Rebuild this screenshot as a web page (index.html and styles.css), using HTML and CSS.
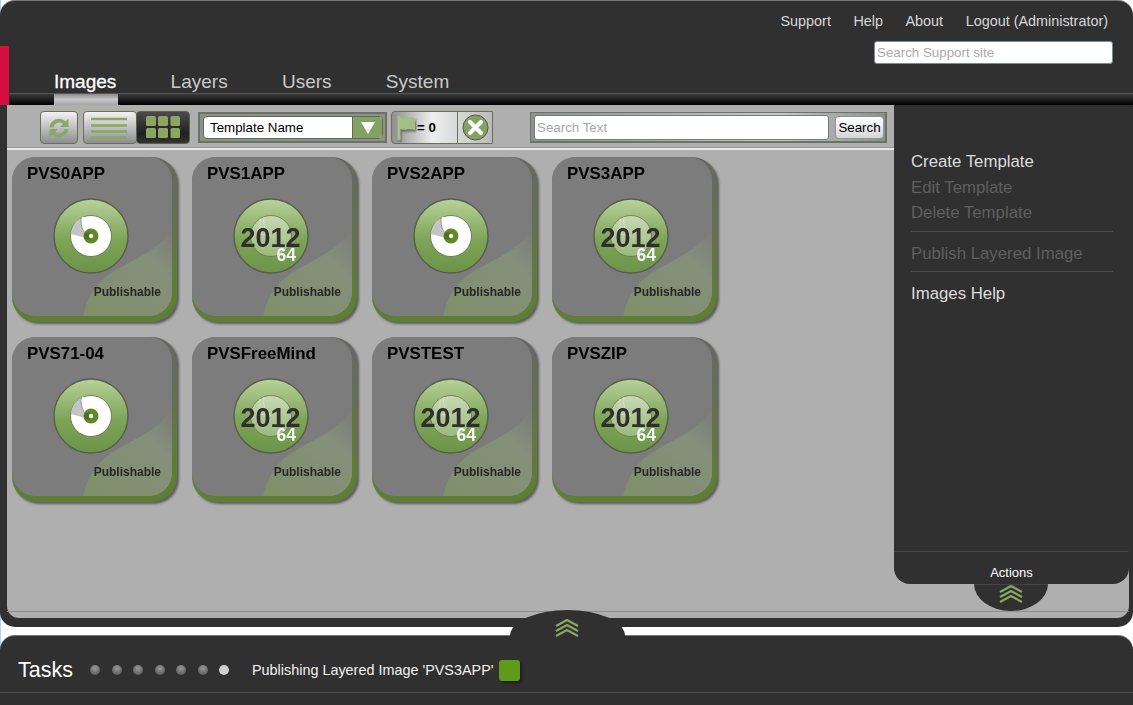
FILE: index.html
```html
<!DOCTYPE html>
<html lang="en">
<head>
<meta charset="utf-8">
<title>Images</title>
<link rel="stylesheet" href="styles.css">
</head>
<body>
<svg class="defs" width="0" height="0" aria-hidden="true">
  <defs>
    <linearGradient id="disc" x1="0" y1="0" x2="0" y2="1">
      <stop offset="0" stop-color="#b9d29a"/>
      <stop offset=".55" stop-color="#7da457"/>
      <stop offset="1" stop-color="#6c9448"/>
    </linearGradient>
    <linearGradient id="inner" x1="0" y1="0" x2="0" y2="1">
      <stop offset="0" stop-color="#c8d9b4"/>
      <stop offset="1" stop-color="#9aba7c"/>
    </linearGradient>
    <linearGradient id="rim" x1="0" y1="0" x2="0" y2="1">
      <stop offset="0" stop-color="#666"/>
      <stop offset=".4" stop-color="#66704f"/>
      <stop offset=".8" stop-color="#5e7d35"/>
      <stop offset="1" stop-color="#5e7d35"/>
    </linearGradient>
    <linearGradient id="sheen" x1="1" y1="0" x2="0" y2="1">
      <stop offset="0" stop-color="#7b7b7b"/>
      <stop offset=".3" stop-color="#858f7b"/>
      <stop offset="1" stop-color="#7f9069"/>
    </linearGradient>
    <clipPath id="cardface"><rect width="160" height="159" rx="23"/></clipPath>
    <symbol id="card-bg" viewBox="0 0 165 165">
      <rect width="165" height="165" rx="25" fill="url(#rim)"/>
      <rect width="160" height="159" rx="23" fill="#7c7c7c"/>
      <path clip-path="url(#cardface)" d="M71 160C76 136 88 122 106 112C125 101 148 92 161 71V160Z" fill="url(#sheen)"/>
    </symbol>
    <symbol id="disc-app" viewBox="0 0 76 76">
      <circle cx="38" cy="38" r="37" fill="url(#disc)" stroke="#565f4c" stroke-width="1.400"/>
      <circle cx="38" cy="38" r="20.500" fill="#fff" stroke="#5f6b52" stroke-width=".8"/>
      <path d="M27 20.500A20 20 0 0 0 18 36L36 41Z" fill="#c4c4c4"/>
      <path d="M30 19Q28 32 36 38" fill="none" stroke="#fff" stroke-width="2"/>
      <path d="M28 20Q27 31 34 37" fill="none" stroke="#8d8d8d" stroke-width=".8"/>
      <circle cx="38" cy="38" r="7.500" fill="#5f8a26"/>
      <circle cx="34.500" cy="38" r="3.500" fill="#41651a" opacity=".7"/>
      <circle cx="38" cy="38" r="2.200" fill="#fff"/>
    </symbol>
    <symbol id="disc-2012" viewBox="0 0 76 76">
      <circle cx="38" cy="38" r="37" fill="url(#disc)" stroke="#565f4c" stroke-width="1.400"/>
      <circle cx="38" cy="38" r="20.500" fill="url(#inner)" stroke="#66734f" stroke-width=".8"/>
      <path d="M27 20.500V36L38 38M31 19Q29 30 37 37" fill="none" stroke="#e1e8d6" stroke-width=".7"/>
    </symbol>
    <symbol id="chevrons" viewBox="0 0 24 18">
      <path d="M1 7 12 1 23 7M1 12 12 6 23 12M1 17 12 11 23 17" fill="none" stroke="#8ca662" stroke-width="2.200"/>
    </symbol>
  </defs>
</svg>

<div class="app">
  <div class="accent"></div>
  <header class="header">
    <nav class="toplinks">
      <a>Support</a><a>Help</a><a>About</a><a>Logout (Administrator)</a>
    </nav>
    <input class="support-search" type="text" placeholder="Search Support site">
    <nav class="tabs">
      <a class="tab active">Images</a><a class="tab">Layers</a><a class="tab">Users</a><a class="tab">System</a>
    </nav>
  </header>
  <div class="tabbar"><span class="tabmark"></span></div>

  <main class="content">
    <div class="workspace">
      <div class="toolbar">
        <button class="tool refresh" aria-label="Refresh">
          <svg width="22" height="22" viewBox="0 0 22 22"><path d="M1.500 10.500A9.500 9.500 0 0 1 17.500 4.500L20.500 1.500V10H12L15 7A5.800 5.800 0 0 0 5.500 10.500ZM20.500 12A9.500 9.500 0 0 1 4.500 17.500L1.500 20.500V12H10L7 15A5.800 5.800 0 0 0 16.500 12Z" fill="#8aa868"/></svg>
        </button>
        <div class="viewswitch">
          <button class="tool view" aria-label="List view">
            <svg width="37" height="22" viewBox="0 0 37 22"><path d="M0 2H36M0 8.500H36M0 14.500H36M0 20.500H36" stroke="#8ca662" stroke-width="2.500" fill="none"/></svg>
          </button>
          <button class="tool view on" aria-label="Grid view">
            <svg width="35" height="23" viewBox="0 0 35 23"><g fill="#8ca662"><rect x="1" width="10" height="10" rx="1.500"/><rect x="13" width="10" height="10" rx="1.500"/><rect x="25.500" width="9.500" height="10" rx="1.500"/><rect x="1" y="12" width="10" height="10" rx="1.500"/><rect x="13" y="12" width="10" height="10" rx="1.500"/><rect x="25.500" y="12" width="9.500" height="10" rx="1.500"/></g></svg>
          </button>
        </div>
        <div class="group sortgroup">
          <div class="select">
            <span class="select-label">Template Name</span>
            <span class="select-arrow"><svg width="14" height="12" viewBox="0 0 14 12"><path d="M0 0H14L7 12Z" fill="#fff"/></svg></span>
          </div>
        </div>
        <div class="flaggroup">
          <span class="flagcount">
            <svg class="flag" width="19" height="26" viewBox="0 0 19 26"><path d="M2 1V25" stroke="#a9bf8d" stroke-width="3"/><path d="M3 2C8 4 11 1 18 3V15C11 13 8 16 3 14Z" fill="#a3c083"/></svg>
            <b>= 0</b>
          </span>
          <span class="flagclear">
            <svg width="27" height="27" viewBox="0 0 27 27"><circle cx="13.500" cy="13.500" r="12.500" fill="#84a062" stroke="#4f5b45"/><path d="M8 8 19 19M19 8 8 19" stroke="#fff" stroke-width="4.200" stroke-linecap="round"/></svg>
          </span>
        </div>
        <div class="group searchgroup">
          <input class="textsearch" type="text" placeholder="Search Text">
          <button class="searchbtn">Search</button>
        </div>
      </div>

      <div class="cards">
        <article class="card"><svg class="card-face" width="165" height="165"><use href="#card-bg"/></svg><h3>PVS0APP</h3><div class="disc"><svg width="76" height="76"><use href="#disc-app"/></svg></div><span class="state">Publishable</span></article>
        <article class="card"><svg class="card-face" width="165" height="165"><use href="#card-bg"/></svg><h3>PVS1APP</h3><div class="disc"><svg width="76" height="76"><use href="#disc-2012"/></svg><span class="year">2012</span><span class="bits">64</span></div><span class="state">Publishable</span></article>
        <article class="card"><svg class="card-face" width="165" height="165"><use href="#card-bg"/></svg><h3>PVS2APP</h3><div class="disc"><svg width="76" height="76"><use href="#disc-app"/></svg></div><span class="state">Publishable</span></article>
        <article class="card"><svg class="card-face" width="165" height="165"><use href="#card-bg"/></svg><h3>PVS3APP</h3><div class="disc"><svg width="76" height="76"><use href="#disc-2012"/></svg><span class="year">2012</span><span class="bits">64</span></div><span class="state">Publishable</span></article>
        <article class="card"><svg class="card-face" width="165" height="165"><use href="#card-bg"/></svg><h3>PVS71-04</h3><div class="disc"><svg width="76" height="76"><use href="#disc-app"/></svg></div><span class="state">Publishable</span></article>
        <article class="card"><svg class="card-face" width="165" height="165"><use href="#card-bg"/></svg><h3>PVSFreeMind</h3><div class="disc"><svg width="76" height="76"><use href="#disc-2012"/></svg><span class="year">2012</span><span class="bits">64</span></div><span class="state">Publishable</span></article>
        <article class="card"><svg class="card-face" width="165" height="165"><use href="#card-bg"/></svg><h3>PVSTEST</h3><div class="disc"><svg width="76" height="76"><use href="#disc-2012"/></svg><span class="year">2012</span><span class="bits">64</span></div><span class="state">Publishable</span></article>
        <article class="card"><svg class="card-face" width="165" height="165"><use href="#card-bg"/></svg><h3>PVSZIP</h3><div class="disc"><svg width="76" height="76"><use href="#disc-2012"/></svg><span class="year">2012</span><span class="bits">64</span></div><span class="state">Publishable</span></article>
      </div>
      <div class="bottomrule"></div>
    </div>

    <aside class="actions">
      <div class="actions-body">
        <ul class="actionlist">
          <li>Create Template</li>
          <li class="off">Edit Template</li>
          <li class="off">Delete Template</li>
          <li class="off sep">Publish Layered Image</li>
          <li class="sep">Images Help</li>
        </ul>
      </div>
      <div class="actions-foot">Actions</div>
      <div class="actions-pull"><svg width="24" height="18"><use href="#chevrons"/></svg></div>
    </aside>
  </main>
</div>

<footer class="tasks">
  <div class="tasks-pull"><svg width="24" height="18"><use href="#chevrons"/></svg></div>
  <div class="tasks-row">
    <span class="tasks-title">Tasks</span>
    <span class="dots"><i></i><i></i><i></i><i></i><i></i><i></i><i class="lit"></i></span>
    <span class="tasks-msg">Publishing Layered Image 'PVS3APP'</span>
    <span class="tasks-flag"></span>
  </div>
</footer>
</body>
</html>
```
FILE: styles.css
```css
* { box-sizing: border-box; }
html, body { height: 100%; }
body {
  margin: 0;
  width: 1133px;
  height: 705px;
  overflow: hidden;
  background: linear-gradient(90deg, #b5d0ee 1px, #fff 1px);
  font-family: "Liberation Sans", Arial, sans-serif;
  display: flex;
  flex-direction: column;
  gap: 8px;
}
.defs { position: absolute; }

.app {
  position: relative;
  height: 627px;
  background: #303030;
  border-radius: 15px;
  border-top: 1px solid #777;
  display: flex;
  flex-direction: column;
}
.accent {
  position: absolute;
  left: 0;
  top: 45px;
  width: 9px;
  height: 59px;
  background: #d5103f;
}

.header {
  height: 92px;
  position: relative;
  flex: none;
  display: flex;
  flex-direction: column;
  align-items: flex-end;
}
.toplinks {
  display: flex;
  gap: 22.500px;
  padding: 12px 25px 0 0;
  height: 40px;
  color: #d8d8d8;
  font-size: 14.400px;
  line-height: 17px;
}
.support-search {
  width: 239px;
  height: 23px;
  margin-right: 20px;
  padding: 0 2px;
  border: 1px solid #7d8a96;
  border-radius: 3px;
  background: #fff;
  font: 13.333px "Liberation Sans", Arial, sans-serif;
}
.support-search::placeholder, .textsearch::placeholder { color: #a9a9a9; opacity: 1; }
.tabs {
  align-self: flex-start;
  display: flex;
  gap: 54.300px;
  padding: 7px 0 0 54px;
  font-size: 19px;
  line-height: 22px;
  color: #c9c9c9;
}
.tab.active { color: #fff; -webkit-text-stroke: .3px #fff; }

.tabbar {
  height: 12px;
  flex: none;
  border-top: 1px solid #555;
  background: linear-gradient(#3b3b3b, #000);
  padding-left: 54px;
}
.tabmark {
  display: block;
  width: 64px;
  height: 11px;
  background: linear-gradient(#8c8c8c, #c9c9c9 50%, #a5a5a5);
}

.content {
  position: relative;
  flex: 1;
  min-height: 0;
  margin: 0 4px 9px 7px;
  background: #afafaf;
  border-radius: 0 0 12px 12px;
}
.workspace { height: 100%; display: flex; flex-direction: column; }

.toolbar {
  height: 45px;
  flex: none;
  display: flex;
  align-items: flex-start;
  padding: 6px 0 0 32.500px;
  border-bottom: 2px solid #e8e8e8;
  box-shadow: 0 -1px 0 #999 inset;
}
.tool {
  display: flex;
  align-items: center;
  justify-content: center;
  padding: 0;
  height: 33px;
  border: 1px solid #66705b;
  border-radius: 4px;
  background: linear-gradient(#f2f2f2, #8e8e8e);
}
.refresh { width: 38px; }
.viewswitch { display: flex; margin-left: 5px; }
.view { width: 54px; }
.view.on { background: linear-gradient(#4a4a4a, #202020 70%, #333); margin-left: -1px; border-color: #5a6352; }
.group {
  height: 31px;
  margin-top: 1px;
  border: 2px solid #6b745f;
  background: linear-gradient(90deg, #8f8f8f, #c9c9c9 70%, #8d8d8d);
  display: flex;
  align-items: center;
}
.sortgroup { width: 189px; margin-left: 8.500px; padding: 0 2px 0 3px; background: #8f8f8f; }
.select {
  flex: 1;
  height: 23px;
  display: flex;
  background: #fff;
  border: 1px solid #62695a;
  border-radius: 4px;
  overflow: hidden;
}
.select-label { flex: 1; padding-left: 6px; font-size: 13.333px; line-height: 21px; color: #000; }
.select-arrow {
  width: 30px;
  background: #84a062;
  border-left: 1px solid #62695a;
  display: flex;
  align-items: center;
  justify-content: center;
}
.flaggroup {
  display: flex;
  height: 33px;
  margin-left: 4px;
  border: 1px solid #66705b;
  border-radius: 4px 0 0 4px;
  background: linear-gradient(90deg, #8f8f8f, #eee 40%, #bbb);
}
.flagcount {
  width: 66px;
  display: flex;
  align-items: center;
  padding-left: 5px;
  gap: 1px;
  font-size: 13.333px;
  color: #000;
  border-right: 1px solid #66705b;
}
.flag { filter: drop-shadow(1px 2px 1px #666); }
.flagclear { width: 34px; display: flex; align-items: center; justify-content: center; }
.searchgroup { width: 357px; margin-left: 37px; padding: 0 1px 0 3px; border-width: 1px 2px 2px 1px; gap: 6px; }
.textsearch {
  flex: 1;
  min-width: 0;
  height: 25px;
  padding: 0 2px;
  border: 1px solid #717c88;
  border-radius: 3px;
  background: #fff;
  font: 13.333px "Liberation Sans", Arial, sans-serif;
}
.searchbtn {
  width: 49px;
  height: 23px;
  padding: 0;
  border: 1px solid #8a97a5;
  border-radius: 4px;
  background: linear-gradient(#fff, #d5d5d5);
  font: 13.333px "Liberation Sans", Arial, sans-serif;
  color: #000;
}

.cards {
  flex: 1;
  display: grid;
  grid-template-columns: repeat(4, 164px);
  grid-auto-rows: 164px;
  column-gap: 16px;
  row-gap: 16px;
  align-content: start;
  padding: 7px 0 0 5px;
}
.card {
  position: relative;
  filter: drop-shadow(2px 2px 1px #5c5c5c);
}
.card-face { position: absolute; left: 0; top: 0; }
.card h3 {
  position: relative;
  margin: 0;
  padding: 7px 0 0 15px;
  font-size: 16.900px;
  line-height: 19px;
  font-weight: bold;
  color: #000;
}
.disc {
  position: absolute;
  left: 40.500px;
  top: 41px;
  width: 76px;
  height: 76px;
}
.disc svg { display: block; }
.year {
  position: absolute;
  left: 0;
  top: 24px;
  width: 76px;
  text-align: center;
  font-size: 27px;
  line-height: 32px;
  font-weight: bold;
  color: #2f2f2f;
}
.bits {
  position: absolute;
  left: 44px;
  top: 47px;
  font-size: 17.500px;
  line-height: 20px;
  font-weight: bold;
  color: #f3f3f3;
}
.state {
  position: absolute;
  right: 15px;
  top: 128px;
  font-size: 12px;
  line-height: 15px;
  font-weight: bold;
  color: #262626;
}
.bottomrule { height: 7px; flex: none; border-top: 1px solid #8e8e8e; }

.actions {
  position: absolute;
  right: 0;
  top: 0;
  width: 235px;
  height: 479px;
  background: #303030;
  border-radius: 0 0 16px 16px;
  display: flex;
  flex-direction: column;
  color: #ddd;
}
.actions-body { flex: 1; padding: 44px 16px 0 17px; }
.actionlist { list-style: none; margin: 0; padding: 0; font-size: 16.800px; }
.actionlist li { line-height: 25.500px; }
.actionlist .off { color: #5f5f5f; }
.actionlist .sep { margin-top: 5px; padding-top: 9px; border-top: 1px solid #4a4a4a; }
.actions-foot {
  height: 33px;
  flex: none;
  border-top: 1px solid #434343;
  padding-top: 13px;
  text-align: center;
  font-size: 13px;
  line-height: 15px;
  color: #fff;
}
.actions-pull {
  position: absolute;
  left: 80px;
  top: 479px;
  width: 74px;
  height: 27px;
  background: #303030;
  border-top: 1px solid #434343;
  border-radius: 0 0 37px 37px / 0 0 27px 27px;
  display: flex;
  justify-content: center;
}

.tasks {
  position: relative;
  height: 70px;
  flex: none;
  background: #303030;
  border-top: 1px solid #777;
  border-radius: 15px 15px 0 0;
}
.tasks-pull {
  position: absolute;
  left: 510px;
  top: -26px;
  width: 115px;
  height: 26px;
  background: #303030;
  border-radius: 50% 50% 0 0 / 100% 100% 0 0;
  display: flex;
  justify-content: center;
  padding: 9px 2px 0 0;
}
.tasks-row {
  height: 57px;
  border-bottom: 1px solid #4e4e4e;
  display: flex;
  align-items: center;
  padding: 12px 0 0 18px;
}
.tasks-title { font-size: 21.500px; color: #fff; width: 72px; }
.dots { display: flex; gap: 11.500px; }
.dots i {
  display: block;
  width: 10px;
  height: 10px;
  border-radius: 50%;
  background: radial-gradient(circle at 50% 35%, #9a9a9a, #4c4c4c);
}
.dots .lit { background: #cfcfcf; }
.tasks-msg { margin-left: 23px; font-size: 14.400px; color: #f2f2f2; }
.tasks-flag {
  width: 21px;
  height: 21px;
  margin-left: 5px;
  background: #5f9a18;
  border-radius: 3px;
  box-shadow: 2px 2px 3px #1d1d1d;
}
```
